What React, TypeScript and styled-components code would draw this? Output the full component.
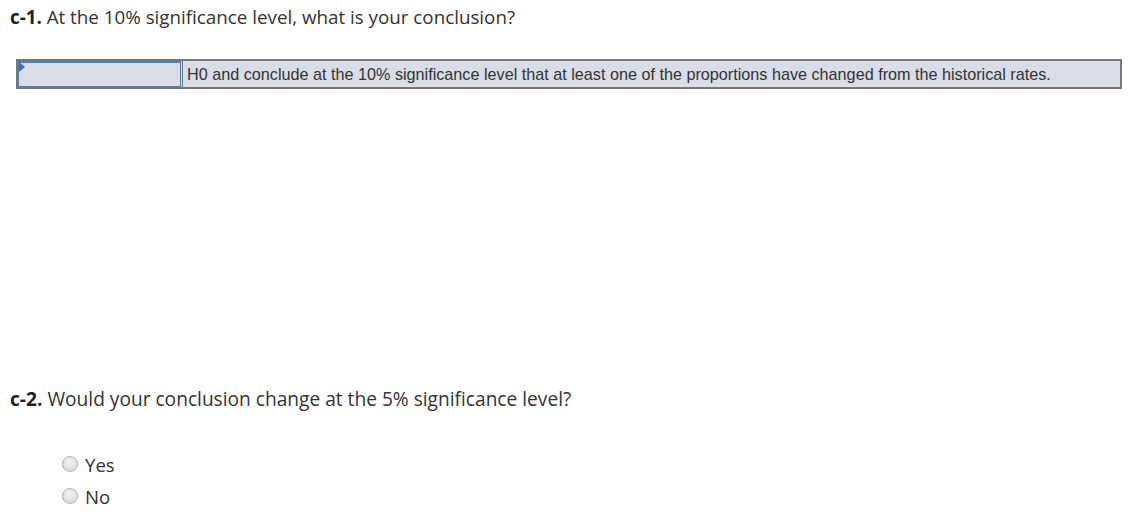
import React from "react";
import styled, { createGlobalStyle } from "styled-components";

const Global = createGlobalStyle`
  html, body { margin: 0; padding: 0; background: #fff; }
  body { font-family: "Open Sans", sans-serif; color: #333; }
`;

const Page = styled.div`
  padding: 4px 10px 0 10px;
  display: flex;
  flex-direction: column;
`;

const Question = styled.div`
  font-family: "Open Sans", sans-serif;
  font-size: 18.8px;
  color: #333;
  line-height: 26px;
  b { font-weight: 700; color: #222; }
`;

const AnswerRow = styled.div`
  margin: 29px 0 0 6px;
  width: 1102px;
  height: 26px;
  border: 2px solid #777;
  background: #d9dde8;
  display: flex;
  align-items: stretch;
`;

const SelectCell = styled.div`
  position: relative;
  width: 161px;
  border: 1px solid #4a7ebd;
  border-top: 2px solid #4a7ebd;
  background: #d9dde8;
`;

const Flag = styled.span`
  position: absolute;
  left: 0;
  top: -1px;
  width: 0;
  height: 0;
  border-top: 5px solid transparent;
  border-bottom: 5px solid transparent;
  border-left: 6px solid #3c6fb4;
`;

const TextCell = styled.div`
  flex: 1;
  border-left: 1px solid #777;
  margin-left: 1px;
  padding-left: 4px;
  display: flex;
  align-items: center;
  font-family: "Liberation Sans", Arial, sans-serif;
  font-size: 16.2px;
  color: #333;
  white-space: nowrap;
`;

const Question2 = styled(Question)`
  margin-top: 297px;
  font-size: 19.15px;
`;

const Options = styled.div`
  margin: 40px 0 0 52px;
  display: flex;
  flex-direction: column;
  gap: 8px;
`;

const Option = styled.label`
  display: flex;
  align-items: center;
  gap: 7px;
  font-family: "Open Sans", sans-serif;
  font-size: 18.6px;
  color: #333;
  height: 24px;
`;

const Radio = styled.span`
  width: 14px;
  height: 14px;
  border-radius: 50%;
  border: 1px solid #b5b5b5;
  background: radial-gradient(circle at 50% 35%, #f4f4f4 0%, #dcdcdc 70%, #cfcfcf 100%);
  box-sizing: content-box;
`;

export default function App() {
  return (
    <>
      <Global />
      <Page>
        <Question>
          <b>c-1.</b> At the 10% significance level, what is your conclusion?
        </Question>
        <AnswerRow>
          <SelectCell>
            <Flag />
          </SelectCell>
          <TextCell>
            H0 and conclude at the 10% significance level that at least one of the proportions have changed from the historical rates.
          </TextCell>
        </AnswerRow>
        <Question2>
          <b>c-2.</b> Would your conclusion change at the 5% significance level?
        </Question2>
        <Options>
          <Option>
            <Radio />
            Yes
          </Option>
          <Option>
            <Radio />
            No
          </Option>
        </Options>
      </Page>
    </>
  );
}
